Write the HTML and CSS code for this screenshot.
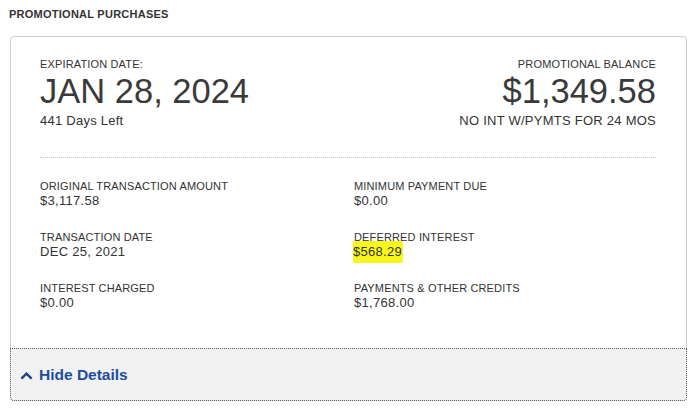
FILE: index.html
```html
<!DOCTYPE html>
<html>
<head>
<meta charset="utf-8">
<link rel="stylesheet" href="styles.css">
</head>
<body>
<div class="page">
  <h2 class="section-title">PROMOTIONAL PURCHASES</h2>
  <div class="card">
    <div class="card-body">
      <div class="summary">
        <div class="summary-col">
          <div class="label">EXPIRATION DATE:</div>
          <div class="big">JAN 28, 2024</div>
          <div class="sub">441 Days Left</div>
        </div>
        <div class="summary-col right">
          <div class="label">PROMOTIONAL BALANCE</div>
          <div class="big">$1,349.58</div>
          <div class="sub">NO INT W/PYMTS FOR 24 MOS</div>
        </div>
      </div>
      <div class="divider"></div>
      <div class="details">
        <div class="item">
          <div class="label">ORIGINAL TRANSACTION AMOUNT</div>
          <div class="value">$3,117.58</div>
        </div>
        <div class="item">
          <div class="label">MINIMUM PAYMENT DUE</div>
          <div class="value">$0.00</div>
        </div>
        <div class="item">
          <div class="label">TRANSACTION DATE</div>
          <div class="value">DEC 25, 2021</div>
        </div>
        <div class="item">
          <div class="label">DEFERRED INTEREST</div>
          <div class="value"><span class="highlight">$568.29</span></div>
        </div>
        <div class="item">
          <div class="label">INTEREST CHARGED</div>
          <div class="value">$0.00</div>
        </div>
        <div class="item">
          <div class="label">PAYMENTS &amp; OTHER CREDITS</div>
          <div class="value">$1,768.00</div>
        </div>
      </div>
    </div>
    <div class="card-footer">
      <svg class="chev" width="13" height="8" viewBox="0 0 13 8"><path d="M1.4 6.6 L6.5 1.7 L11.6 6.6" fill="none" stroke="#1c3f86" stroke-width="2.3"/></svg>
      <span class="toggle">Hide Details</span>
    </div>
  </div>
</div>
</body>
</html>
```
FILE: styles.css
```css
html, body {
  margin: 0;
  padding: 0;
  background: #fff;
}
body {
  font-family: "Liberation Sans", Arial, sans-serif;
  color: #333;
}
.page {
  padding: 7px 7px 0 9px;
}
.section-title {
  margin: 0;
  font-size: 11px;
  line-height: 14px;
  font-weight: bold;
  letter-spacing: 0.25px;
  color: #333;
}
.card {
  margin-top: 15px;
  margin-left: 1px;
  border: 1px solid #cfcfcf;
  border-radius: 4px;
  width: 675px;
  box-sizing: content-box;
}
.card-body {
  padding: 21px 30px 37px 29px;
}
.summary {
  display: flex;
  justify-content: space-between;
}
.summary-col.right {
  text-align: right;
}
.label {
  font-size: 11px;
  line-height: 13px;
  letter-spacing: 0.15px;
  color: #333;
}
.big {
  font-size: 34.5px;
  line-height: 36px;
  margin-top: 2px;
  letter-spacing: 0;
  color: #3a3a3a;
}
.sub {
  font-size: 13px;
  line-height: 16px;
  margin-top: 4px;
  letter-spacing: 0.25px;
  color: #333;
}
.divider {
  margin-top: 28px;
  border-top: 1px dotted #c4c4c4;
}
.details {
  margin-top: 22px;
  display: grid;
  grid-template-columns: 314px 1fr;
  row-gap: 22px;
}
.value {
  font-size: 13px;
  line-height: 16px;
  letter-spacing: 0.3px;
  color: #333;
}
.highlight {
  background: #f7f71e;
  padding: 3px 1px 4px 0;
  margin-left: -1px;
  border-radius: 2px;
}
.card-footer {
  margin: 0 -1px -1px -1px;
  height: 51px;
  border: 1px dotted #555;
  border-radius: 0 0 4px 4px;
  background: #f2f2f2;
  display: flex;
  align-items: center;
  padding-left: 9px;
  gap: 6px;
}
.chev {
  display: block;
  margin-top: 2px;
}
.toggle {
  font-size: 15.5px;
  font-weight: bold;
  color: #1a4da3;
}
```
